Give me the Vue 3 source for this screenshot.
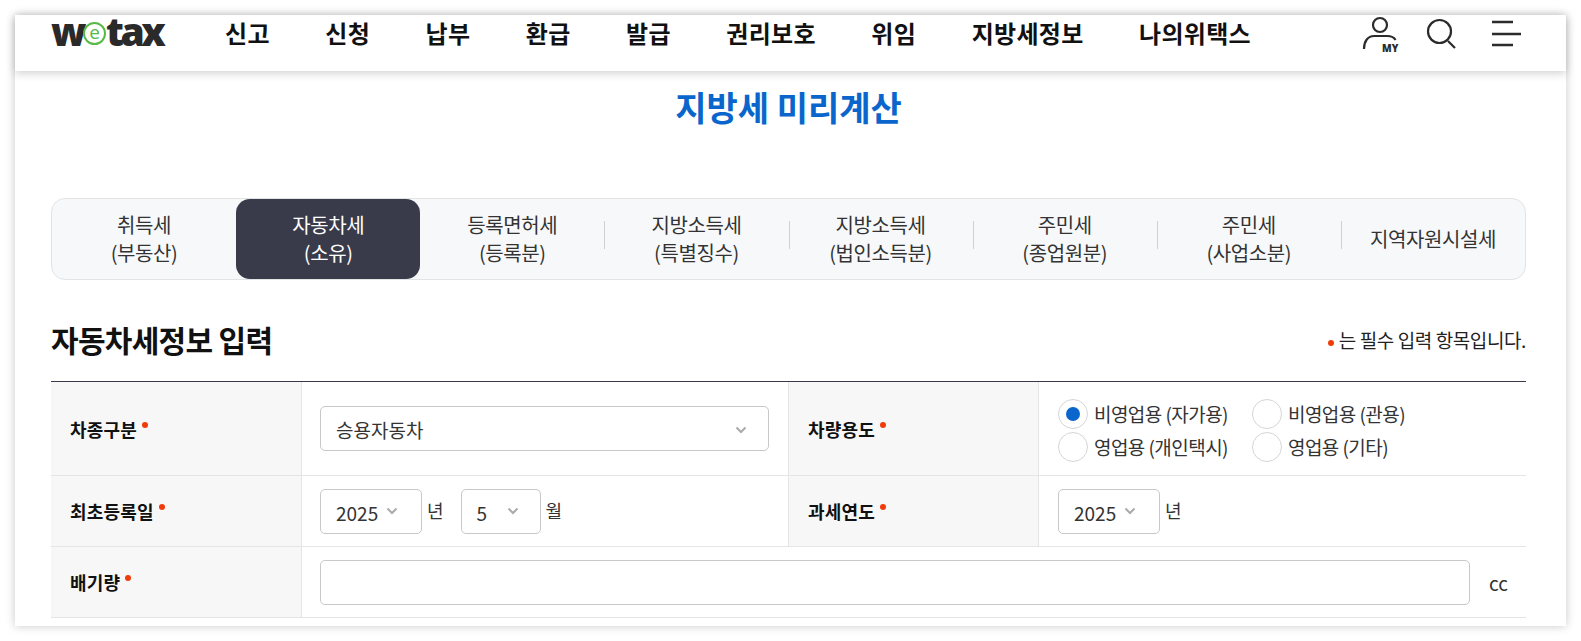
<script setup>
const nav = ['신고', '신청', '납부', '환급', '발급', '권리보호', '위임', '지방세정보', '나의위택스']
const tabs = [
  ['취득세', '(부동산)'], ['자동차세', '(소유)'], ['등록면허세', '(등록분)'], ['지방소득세', '(특별징수)'],
  ['지방소득세', '(법인소득분)'], ['주민세', '(종업원분)'], ['주민세', '(사업소분)'], ['지역자원시설세']
]
const radios = [
  { label: '비영업용 (자가용)', on: true }, { label: '비영업용 (관용)' },
  { label: '영업용 (개인택시)' }, { label: '영업용 (기타)' }
]
</script>

<template>
  <div class="page">
    <div class="card">
      <header class="header">
        <div class="logo"><span>w</span><span class="logo-e">e</span><span>tax</span></div>
        <nav class="nav"><a v-for="n in nav" :key="n">{{ n }}</a></nav>
        <div class="tools">
          <svg class="ic-my" width="38" height="40" viewBox="0 0 38 40" fill="none" stroke="#2b2b2b">
            <circle cx="18" cy="10" r="7" stroke-width="2.200" />
            <path d="M2 34c0-8 4-13 10-13h13c4 0 7 1 8.500 4" stroke-width="2.200" />
            <text x="20" y="37" class="my" stroke="none" fill="#2b2b2b">MY</text>
          </svg>
          <svg class="ic-search" width="30" height="36" viewBox="0 0 30 36" fill="none" stroke="#2b2b2b" stroke-width="2.200">
            <circle cx="13.500" cy="16.500" r="11.500" />
            <path d="M22 26l7 7" />
          </svg>
          <svg class="ic-menu" width="29" height="36" viewBox="0 0 29 36" fill="none" stroke="#2b2b2b" stroke-width="2.300">
            <path d="M0 7h21M0 19h29M0 30h21" />
          </svg>
        </div>
      </header>

      <main class="main">
        <h1 class="title">지방세 미리계산</h1>

        <div class="tabs">
          <div v-for="(t, i) in tabs" :key="i" class="tab" :class="{ active: i === 1, sep: i >= 2 && i < 7 }">
            <span v-for="l in t" :key="l">{{ l }}</span>
          </div>
        </div>

        <div class="section-head">
          <h2>자동차세정보 입력</h2>
          <p><i class="dot"></i>는 필수 입력 항목입니다.</p>
        </div>

        <div class="form">
          <div class="th">차종구분<i class="dot up"></i></div>
          <div class="td">
            <div class="field wide">승용자동차
              <svg class="chev" width="12" height="8" viewBox="0 0 12 8"><path d="M1.500 1.500l4.500 4.500 4.500-4.500" /></svg>
            </div>
          </div>
          <div class="th">차량용도<i class="dot up"></i></div>
          <div class="td last radios">
            <label v-for="r in radios" :key="r.label" class="radio">
              <span class="ring" :class="{ on: r.on }"></span>{{ r.label }}
            </label>
          </div>

          <div class="th">최초등록일<i class="dot up"></i></div>
          <div class="td dates">
            <div class="field y">2025
              <svg class="chev" width="12" height="8" viewBox="0 0 12 8"><path d="M1.500 1.500l4.500 4.500 4.500-4.500" /></svg>
            </div>
            <span class="unit">년</span>
            <div class="field m">5
              <svg class="chev" width="12" height="8" viewBox="0 0 12 8"><path d="M1.500 1.500l4.500 4.500 4.500-4.500" /></svg>
            </div>
            <span class="unit">월</span>
          </div>
          <div class="th">과세연도<i class="dot up"></i></div>
          <div class="td last dates">
            <div class="field y">2025
              <svg class="chev" width="12" height="8" viewBox="0 0 12 8"><path d="M1.500 1.500l4.500 4.500 4.500-4.500" /></svg>
            </div>
            <span class="unit">년</span>
          </div>

          <div class="th">배기량<i class="dot up"></i></div>
          <div class="td last span">
            <div class="field input"></div>
            <span class="cc">cc</span>
          </div>
        </div>
      </main>
    </div>
  </div>
</template>

<style>
html, body { margin: 0; background: #fff; }
</style>

<style scoped>
.page {
  box-sizing: border-box;
  width: 1581px;
  height: 641px;
  padding: 15px;
  overflow: hidden;
  font-family: "Noto Sans CJK KR", "Noto Sans", sans-serif;
  color: #222;
}
.card {
  height: 611px;
  background: #fff;
  box-shadow: 0 0 9px rgba(0, 0, 0, .22);
}
.header {
  height: 56px;
  box-sizing: border-box;
  padding: 0 45px 0 36px;
  display: flex;
  align-items: flex-start;
  box-shadow: 0 2px 9px rgba(0, 0, 0, .2);
  position: relative;
}
.logo {
  width: 174px;
  height: 32px;
  display: flex;
  align-items: flex-start;
  font: 800 39px/32px "Open Sans", sans-serif;
  letter-spacing: -3.5px;
  color: #2a2a2a;
}
.logo-e {
  box-sizing: border-box;
  flex: none;
  width: 23px;
  height: 23px;
  margin: 7px 0 0;
  border: 2px solid #58b947;
  border-radius: 50%;
  color: #58b947;
  font: 400 19px/17px "Open Sans", sans-serif;
  text-align: center;
  letter-spacing: 0;
}
.nav {
  display: flex;
  gap: 55.500px;
  font-size: 24px;
  font-weight: 700;
  line-height: 36px;
  letter-spacing: .3px;
  color: #111;
}
.tools {
  margin-left: auto;
  display: flex;
  align-items: flex-start;
}
.ic-search { margin-left: 26px; }
.ic-menu { margin-left: 36px; }
.my { font: 800 10px "Open Sans", sans-serif; }
.main { padding: 0 40px 0 36px; }
.title {
  margin: 11px 0 0;
  text-align: center;
  font-size: 34px;
  line-height: 50px;
  font-weight: 700;
  color: #0a66cc;
}
.tabs {
  margin-top: 66px;
  height: 82px;
  box-sizing: border-box;
  display: grid;
  grid-template-columns: repeat(8, 1fr);
  border: 1px solid #e2e3e5;
  border-radius: 14px;
  background: #f7f8fa;
}
.tab {
  position: relative;
  display: flex;
  flex-direction: column;
  align-items: center;
  justify-content: center;
  font-size: 20px;
  line-height: 28px;
  letter-spacing: -.4px;
  color: #333;
}
.tab.active {
  background: #393b4b;
  color: #fff;
  border-radius: 14px;
}
.tab.sep::after {
  content: "";
  position: absolute;
  right: -1px;
  top: 22px;
  height: 28px;
  width: 1px;
  background: #d0d0d0;
}
.section-head {
  margin-top: 36px;
  height: 47px;
  display: flex;
  justify-content: space-between;
  align-items: center;
}
.section-head h2 {
  margin: 0;
  font-size: 30px;
  line-height: 47px;
  font-weight: 700;
  letter-spacing: -.7px;
  color: #111;
}
.section-head p {
  margin: 0;
  font-size: 19px;
  letter-spacing: -.4px;
  color: #222;
}
.dot {
  display: inline-block;
  width: 6px;
  height: 6px;
  margin-right: 5px;
  border-radius: 50%;
  background: #f03c0a;
  vertical-align: middle;
}
.dot.up { margin: 0 0 0 5px; align-self: center; position: relative; top: -4px; }
.form {
  margin-top: 18px;
  border-top: 1px solid #393b4b;
  display: grid;
  grid-template-columns: 251px 487px 250px 487px;
  grid-template-rows: 94px 71px 71px;
}
.th, .td {
  box-sizing: border-box;
  border-bottom: 1px solid #e5e5e5;
  display: flex;
  align-items: center;
}
.th {
  background: #f7f7f7;
  padding-left: 19px;
  border-right: 1px solid #e5e5e5;
  font-size: 18px;
  font-weight: 700;
  letter-spacing: .2px;
  color: #111;
}
.td { padding-left: 18px; border-right: 1px solid #e5e5e5; }
.td.last { border-right: 0; padding-left: 19px; }
.td.span { padding-left: 18px; }
.span { grid-column: span 3; }
.field {
  box-sizing: border-box;
  position: relative;
  height: 45px;
  border: 1px solid #c8c8c8;
  border-radius: 5px;
  background: #fff;
  padding: 2px 0 0 15px;
  display: flex;
  align-items: center;
  font-size: 19px;
  color: #333;
}
.wide { width: 449px; }
.y { width: 102px; }
.m { width: 80px; }
.input { width: 1150px; }
.chev { position: absolute; right: 21px; top: 19px; }
.chev path { fill: none; stroke: #aaa; stroke-width: 2; }
.y .chev { right: 23px; top: 17px; }
.m .chev { right: 21px; top: 17px; }
.unit { font-size: 18px; color: #333; margin: 0 17px 3px 5px; }
.radios {
  display: grid;
  grid-template-columns: 194px auto;
  grid-auto-rows: 33px;
  align-content: center;
  justify-content: start;
  padding-top: 3px;
}
.radio {
  display: flex;
  align-items: center;
  font-size: 19px;
  letter-spacing: -.55px;
  color: #333;
  white-space: nowrap;
}
.ring {
  box-sizing: border-box;
  position: relative;
  width: 30px;
  height: 30px;
  margin-right: 6px;
  border: 1px solid #d5d5d5;
  border-radius: 50%;
  background: #fff;
}
.ring.on::after {
  content: "";
  position: absolute;
  left: 7px;
  top: 7px;
  width: 14px;
  height: 14px;
  border-radius: 50%;
  background: #0a66cc;
}
.cc { margin-left: 19px; font-size: 19px; color: #333; }
</style>
